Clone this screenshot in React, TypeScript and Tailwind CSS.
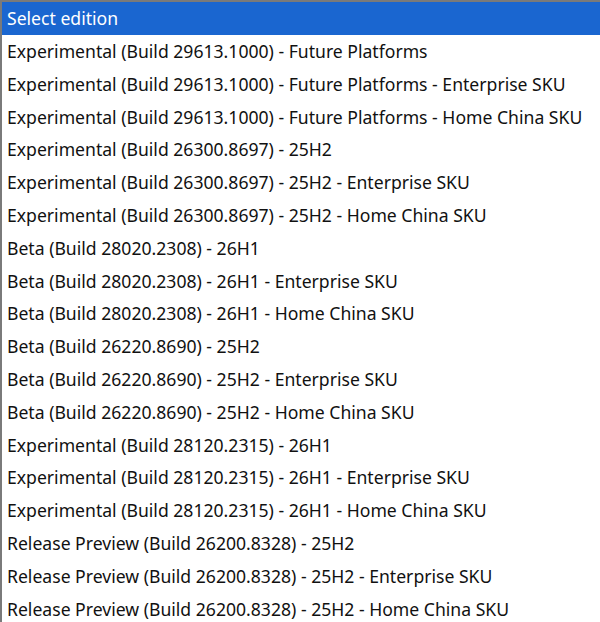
const editions = [
  "Experimental (Build 29613.1000) - Future Platforms",
  "Experimental (Build 29613.1000) - Future Platforms - Enterprise SKU",
  "Experimental (Build 29613.1000) - Future Platforms - Home China SKU",
  "Experimental (Build 26300.8697) - 25H2",
  "Experimental (Build 26300.8697) - 25H2 - Enterprise SKU",
  "Experimental (Build 26300.8697) - 25H2 - Home China SKU",
  "Beta (Build 28020.2308) - 26H1",
  "Beta (Build 28020.2308) - 26H1 - Enterprise SKU",
  "Beta (Build 28020.2308) - 26H1 - Home China SKU",
  "Beta (Build 26220.8690) - 25H2",
  "Beta (Build 26220.8690) - 25H2 - Enterprise SKU",
  "Beta (Build 26220.8690) - 25H2 - Home China SKU",
  "Experimental (Build 28120.2315) - 26H1",
  "Experimental (Build 28120.2315) - 26H1 - Enterprise SKU",
  "Experimental (Build 28120.2315) - 26H1 - Home China SKU",
  "Release Preview (Build 26200.8328) - 25H2",
  "Release Preview (Build 26200.8328) - 25H2 - Enterprise SKU",
  "Release Preview (Build 26200.8328) - 25H2 - Home China SKU",
];

export default function App() {
  return (
    <div className="w-[600px] h-[622px] overflow-hidden bg-white border-t-2 border-l-2 border-[#7a7a7a] font-['Noto_Sans',sans-serif] text-[17.6px] text-[#111]">
      <ul>
        <li className="h-[32.8px] flex items-center px-[5px] bg-[#1a66d0] text-white">
          Select edition
        </li>
        {editions.map((e) => (
          <li key={e} className="h-[32.8px] flex items-center px-[5px]">
            {e}
          </li>
        ))}
      </ul>
    </div>
  );
}
